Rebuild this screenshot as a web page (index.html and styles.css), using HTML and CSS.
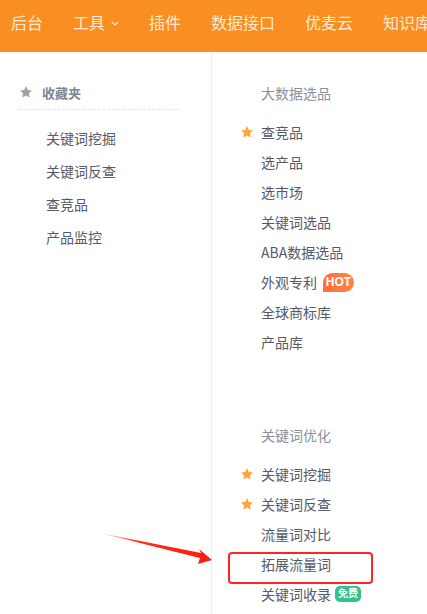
FILE: index.html
```html
<!DOCTYPE html>
<html lang="zh-CN">
<head>
    <meta charset="UTF-8">
    <meta name="viewport" content="width=device-width, initial-scale=1.0">
    <title>工具菜单</title>
    <link rel="stylesheet" href="styles.css">
</head>
<body>

    <header class="topbar">
        <nav class="nav">
            <a class="nav-item">后台</a>
            <a class="nav-item">工具
                <svg class="chevron" viewBox="0 0 8 5" width="8" height="5"><path d="M1 1l3 3 3-3" fill="none" stroke="currentColor" stroke-width="1.2"/></svg>
            </a>
            <a class="nav-item">插件</a>
            <a class="nav-item">数据接口</a>
            <a class="nav-item">优麦云</a>
            <a class="nav-item">知识库</a>
        </nav>
    </header>

    <div class="menu">
        <!-- favourites column -->
        <aside class="side">
            <div class="fav-title">
                <svg class="star" viewBox="0 0 24 24"><path d="M12 1.8l3.1 6.6 7.1.9-5.2 4.9 1.3 7.1L12 17.8l-6.3 3.5 1.3-7.1L1.8 9.3l7.1-.9z"/></svg>
                收藏夹
            </div>
            <ul class="fav-list">
                <li>关键词挖掘</li>
                <li>关键词反查</li>
                <li>查竞品</li>
                <li>产品监控</li>
            </ul>
        </aside>

        <!-- tool groups -->
        <section class="groups">
            <div class="group">
                <h3 class="group-title">大数据选品</h3>
                <ul class="tool-list">
                    <li class="starred"><svg class="star" viewBox="0 0 24 24"><path d="M12 1.8l3.1 6.6 7.1.9-5.2 4.9 1.3 7.1L12 17.8l-6.3 3.5 1.3-7.1L1.8 9.3l7.1-.9z"/></svg>查竞品</li>
                    <li>选产品</li>
                    <li>选市场</li>
                    <li>关键词选品</li>
                    <li>ABA数据选品</li>
                    <li>外观专利<span class="badge hot">HOT</span></li>
                    <li>全球商标库</li>
                    <li>产品库</li>
                </ul>
            </div>

            <div class="group">
                <h3 class="group-title">关键词优化</h3>
                <ul class="tool-list">
                    <li class="starred"><svg class="star" viewBox="0 0 24 24"><path d="M12 1.8l3.1 6.6 7.1.9-5.2 4.9 1.3 7.1L12 17.8l-6.3 3.5 1.3-7.1L1.8 9.3l7.1-.9z"/></svg>关键词挖掘</li>
                    <li class="starred"><svg class="star" viewBox="0 0 24 24"><path d="M12 1.8l3.1 6.6 7.1.9-5.2 4.9 1.3 7.1L12 17.8l-6.3 3.5 1.3-7.1L1.8 9.3l7.1-.9z"/></svg>关键词反查</li>
                    <li>流量词对比</li>
                    <li class="marked">拓展流量词</li>
                    <li>关键词收录<span class="badge free">免费</span></li>
                </ul>
            </div>
        </section>
    </div>

    <!-- annotation arrow -->
    <svg class="arrow" viewBox="95 525 125 45" width="125" height="45">
        <defs>
            <linearGradient id="fade" x1="0" y1="0" x2="1" y2="0">
                <stop offset="0" stop-color="#ff2a1a" stop-opacity="0.1"/>
                <stop offset="0.35" stop-color="#ff2a1a"/>
                <stop offset="1" stop-color="#ff1a10"/>
            </linearGradient>
        </defs>
        <polygon points="100,533 201,553 199,549 212,560 198,564 200,558" fill="url(#fade)"/>
    </svg>

</body>
</html>
```

FILE: styles.css
```css
/* Basic Reset */
* {
    margin: 0;
    padding: 0;
    box-sizing: border-box;
}

body {
    font-family: 'Noto Sans CJK SC', 'Noto Sans', sans-serif;
    background-color: #fff;
    color: #555a65;
    width: 427px;
    height: 614px;
    overflow: hidden;
    position: relative;
}

ul {
    list-style: none;
}

/* Top bar */
.topbar {
    height: 52px;
    background-color: #f98f22;
}

.nav {
    display: flex;
    gap: 30px;
    padding: 10px 0 0 11px;
    white-space: nowrap;
}

.nav-item {
    display: flex;
    align-items: center;
    font-size: 16px;
    line-height: 24px;
    color: rgba(255, 255, 255, 0.82);
}

.chevron {
    margin-left: 6px;
    margin-top: 2px;
}

/* Menu body */
.menu {
    display: flex;
    height: 562px;
}

.side {
    width: 212px;
    flex-shrink: 0;
    border-right: 1px solid #ececec;
    padding: 30px 0 0 18px;
}

.fav-title {
    display: flex;
    align-items: center;
    width: 162px;
    height: 28px;
    padding: 0 0 7px 1px;
    font-size: 13px;
    font-weight: bold;
    color: #7f8491;
    border-bottom: 1px dashed #e3e4e8;
}

.fav-title .star {
    width: 14px;
    height: 14px;
    fill: #9ca1ac;
    margin-right: 9px;
}

.fav-list {
    margin-top: 12px;
    padding-left: 28px;
}

.fav-list li {
    font-size: 14px;
    line-height: 33px;
    color: #555a65;
}

/* Tool groups */
.groups {
    padding: 31px 0 0 28px;
}

.group + .group {
    margin-top: 68px;
}

.group-title {
    font-size: 14px;
    font-weight: normal;
    line-height: 20px;
    color: #8c909b;
    padding-left: 21px;
}

.tool-list {
    margin-top: 14px;
}

.tool-list li {
    display: flex;
    align-items: center;
    height: 30px;
    padding-left: 21px;
    font-size: 14px;
    color: #555a65;
    position: relative;
}

.tool-list li.starred {
    padding-left: 0;
}

.tool-list .star {
    width: 14px;
    height: 14px;
    fill: #ffa53b;
    margin-right: 7px;
}

.badge {
    display: inline-block;
    color: #fff;
    font-family: 'Liberation Sans', 'Noto Sans CJK SC', sans-serif;
    font-weight: bold;
    text-align: center;
}

.badge.hot {
    margin-left: 6px;
    width: 31px;
    height: 19px;
    line-height: 19px;
    font-size: 12px;
    border-radius: 10px 10px 10px 0;
    background: linear-gradient(90deg, #ff6e3e, #fb8446);
}

.badge.free {
    margin-left: 4px;
    width: 26px;
    height: 16px;
    line-height: 16px;
    font-size: 10px;
    border-radius: 5px;
    background-color: #2fc28b;
}

/* red highlight box */
.marked::after {
    content: "";
    position: absolute;
    left: -12px;
    top: 3px;
    width: 141px;
    height: 28px;
    border: 2px solid #ff2525;
    border-radius: 4px;
}

.arrow {
    position: absolute;
    left: 95px;
    top: 525px;
}
```
